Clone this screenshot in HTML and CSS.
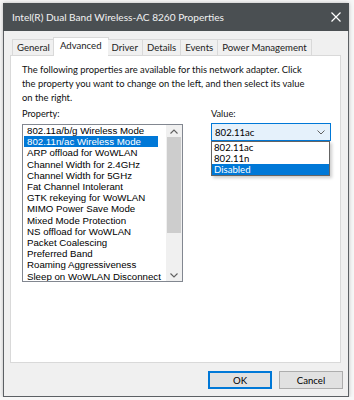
FILE: index.html
```html
<!DOCTYPE html>
<html lang="en">
<head>
    <meta charset="UTF-8">
    <title>Intel(R) Dual Band Wireless-AC 8260 Properties</title>
    <link rel="stylesheet" href="styles.css">
</head>
<body>
    <div class="window">
        <div class="titlebar">
            <span class="title">Intel(R) Dual Band Wireless-AC 8260 Properties</span>
            <svg class="close" width="10" height="10" viewBox="0 0 10 10">
                <path d="M0.5 0.5 L9.5 9.5 M9.5 0.5 L0.5 9.5" stroke="#fff" stroke-width="1.2"/>
            </svg>
        </div>
        <div class="dialog">
            <div class="tabs">
                <div class="tab">General</div>
                <div class="tab active">Advanced</div>
                <div class="tab">Driver</div>
                <div class="tab">Details</div>
                <div class="tab">Events</div>
                <div class="tab">Power Management</div>
            </div>
            <div class="panel">
                <p class="intro">The following properties are available for this network adapter. Click the property you want to change on the left, and then select its value on the right.</p>
                <div class="fields">
                    <div class="prop-col">
                        <div class="label">Property:</div>
                        <div class="listbox">
                            <ul class="items">
                                <li>802.11a/b/g Wireless Mode</li>
                                <li class="sel">802.11n/ac Wireless Mode</li>
                                <li>ARP offload for WoWLAN</li>
                                <li>Channel Width for 2.4GHz</li>
                                <li>Channel Width for 5GHz</li>
                                <li>Fat Channel Intolerant</li>
                                <li>GTK rekeying for WoWLAN</li>
                                <li>MIMO Power Save Mode</li>
                                <li>Mixed Mode Protection</li>
                                <li>NS offload for WoWLAN</li>
                                <li>Packet Coalescing</li>
                                <li>Preferred Band</li>
                                <li>Roaming Aggressiveness</li>
                                <li>Sleep on WoWLAN Disconnect</li>
                            </ul>
                            <div class="scrollbar">
                                <div class="arrow-btn"><svg width="8" height="5" viewBox="0 0 8 5"><path d="M0.5 4.5 L4 1 L7.5 4.5" fill="none" stroke="#606060" stroke-width="1.1"/></svg></div>
                                <div class="track"><div class="thumb"></div></div>
                                <div class="arrow-btn"><svg width="8" height="5" viewBox="0 0 8 5"><path d="M0.5 0.5 L4 4 L7.5 0.5" fill="none" stroke="#606060" stroke-width="1.1"/></svg></div>
                            </div>
                        </div>
                    </div>
                    <div class="value-col">
                        <div class="label">Value:</div>
                        <div class="combo">
                            <span>802.11ac</span>
                            <svg width="8" height="5" viewBox="0 0 8 5"><path d="M0.5 0.5 L4 4 L7.5 0.5" fill="none" stroke="#606060" stroke-width="1"/></svg>
                            <ul class="dropdown">
                                <li>802.11ac</li>
                                <li>802.11n</li>
                                <li class="sel">Disabled</li>
                            </ul>
                        </div>
                    </div>
                </div>
            </div>
            <div class="buttons">
                <button class="btn default">OK</button>
                <button class="btn">Cancel</button>
            </div>
        </div>
    </div>
</body>
</html>
```

FILE: styles.css
```css
* {
    box-sizing: border-box;
}
body {
    margin: 0;
    background-color: #f7f7f7;
    font-family: Lato, "Noto Sans", sans-serif;
    color: #000;
}
.window {
    margin: 3px 0 0 3px;
    width: 346px;
    height: 394px;
    border: 1px solid #5c6064;
    border-top: none;
    background-color: #f0f0f0;
    box-shadow: 0 0 4px rgba(0, 0, 0, 0.25);
    display: flex;
    flex-direction: column;
}
.titlebar {
    flex-shrink: 0;
    height: 28px;
    margin: 0 -1px;
    background-color: #4a4f52;
    display: flex;
    align-items: center;
    justify-content: space-between;
    padding: 0 8px 0 9px;
}
.title {
    color: #f2f2f2;
    font-size: 10.1px;
}
.dialog {
    flex: 1;
    padding: 6px 7px 0 6px;
    display: flex;
    flex-direction: column;
}
.tabs {
    flex-shrink: 0;
    display: flex;
    align-items: flex-end;
    padding-left: 2px;
    height: 18px;
    position: relative;
    z-index: 1;
}
.tab {
    height: 16px;
    padding: 0 4px;
    border: 1px solid #d9d9d9;
    border-bottom: none;
    border-left: none;
    background-color: #f0f0f0;
    font-size: 9.6px;
    line-height: 15px;
    color: #222;
}
.tab:first-child {
    border-left: 1px solid #d9d9d9;
}
.tab.active {
    height: 19px;
    margin: 0 -1px -1px -2px;
    padding: 0 6px;
    border-left: 1px solid #d9d9d9;
    background-color: #fff;
    line-height: 15px;
}
.panel {
    flex-shrink: 0;
    height: 308px;
    background-color: #fff;
    border: 1px solid #d9d9d9;
    padding: 7px 9px 0 11px;
}
.intro {
    margin: 0 0 2px 0;
    font-size: 9.4px;
    line-height: 14px;
    width: 289px;
    color: #111;
}
.fields {
    display: flex;
    justify-content: space-between;
}
.label {
    font-size: 9.2px;
    line-height: 13px;
    margin-bottom: 4px;
    color: #111;
}
.value-col .label {
    margin-bottom: 3px;
}
.listbox {
    width: 161px;
    height: 158px;
    border: 1px solid #828790;
    display: flex;
    font-family: "Liberation Sans", Arial, sans-serif;
    font-size: 9.7px;
}
.items {
    list-style: none;
    margin: 0;
    padding: 0 0 0 1px;
    flex: 1;
    overflow: hidden;
}
.items li {
    line-height: 11.2px;
    padding-left: 3px;
    white-space: nowrap;
}
.items li.sel,
.dropdown li.sel {
    background-color: #0078d7;
    color: #fff;
}
.items li.sel {
    margin-right: 8px;
}
.scrollbar {
    width: 16px;
    flex-shrink: 0;
    background-color: #f0f0f0;
    display: flex;
    flex-direction: column;
}
.arrow-btn {
    height: 12px;
    display: flex;
    align-items: center;
    justify-content: center;
}
.track {
    flex: 1;
    padding: 0 1px;
}
.thumb {
    height: 96px;
    background-color: #cdcdcd;
}
.value-col {
    width: 120px;
}
.combo {
    height: 18px;
    border: 1px solid #0078d7;
    background-color: #e5f1fb;
    display: flex;
    align-items: center;
    justify-content: space-between;
    padding: 0 5px 0 3px;
    font-size: 9.6px;
    position: relative;
}
.dropdown {
    position: absolute;
    top: 17px;
    left: -1px;
    width: 119px;
    list-style: none;
    margin: 0;
    padding: 0;
    background-color: #fff;
    border: 1px solid #646464;
    box-shadow: 2px 2px 3px rgba(0, 0, 0, 0.2);
}
.dropdown li {
    line-height: 11px;
    padding-left: 2px;
}
.buttons {
    display: flex;
    justify-content: flex-end;
    gap: 7px;
    margin: 8px -2px 0 0;
}
.btn {
    width: 64px;
    height: 18px;
    border: 1px solid #adadad;
    background-color: #e1e1e1;
    font-family: Lato, "Noto Sans", sans-serif;
    font-size: 9.6px;
    padding: 0;
    color: #000;
}
.btn.default {
    border: 2px solid #0078d7;
}
```
